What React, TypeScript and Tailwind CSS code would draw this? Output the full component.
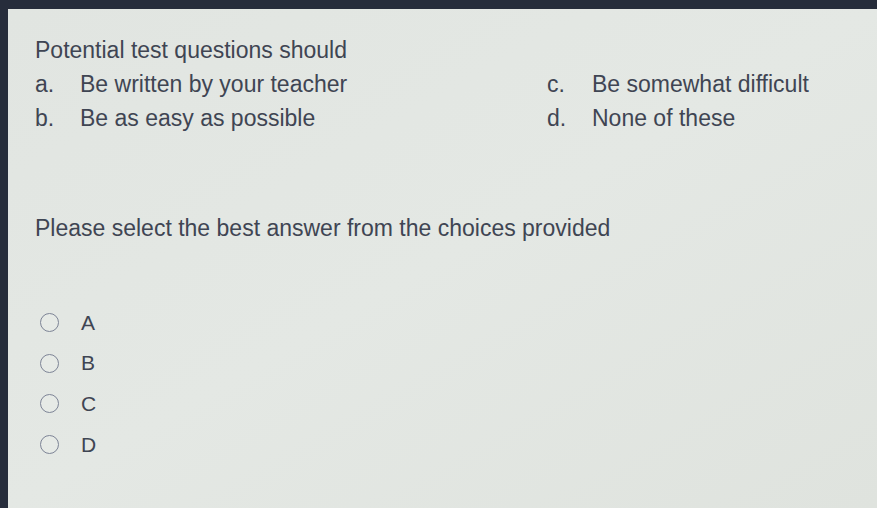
const choices = [
  { key: "a.", text: "Be written by your teacher" },
  { key: "c.", text: "Be somewhat difficult" },
  { key: "b.", text: "Be as easy as possible" },
  { key: "d.", text: "None of these" },
];

const options = ["A", "B", "C", "D"];

export default function App() {
  return (
    <div
      className="w-[877px] h-[508px] overflow-hidden flex flex-col bg-[#262d3b] text-[#3f4553]"
      style={{ fontFamily: '"Liberation Sans", Arial, sans-serif' }}
    >
      <div className="h-[9px] shrink-0" />
      <div className="flex flex-1">
        <div className="w-[8px] shrink-0" />
        <div className="flex-1 bg-gradient-to-br from-[#e1e5e1] via-[#e4e8e4] to-[#dfe3de] pl-[27px] pt-[24px]">
          <div className="text-[23px] leading-[34px]">
            Potential test questions should
          </div>
          <div className="grid grid-cols-[512px_1fr] text-[23px] leading-[34px]">
            {choices.map((c) => (
              <div key={c.key} className="flex">
                <span className="w-[45px] shrink-0">{c.key}</span>
                <span>{c.text}</span>
              </div>
            ))}
          </div>

          <div className="mt-[76px] text-[23px] leading-[34px]">
            Please select the best answer from the choices provided
          </div>

          <div className="mt-[57px] flex flex-col">
            {options.map((o) => (
              <label key={o} className="flex items-center h-[40.7px]">
                <span className="ml-[5px] w-[19px] h-[19px] rounded-full border-[1.5px] border-[#7d8496] bg-[#e6eae6]" />
                <span className="ml-[22px] text-[21px]">{o}</span>
              </label>
            ))}
          </div>
        </div>
      </div>
    </div>
  );
}
